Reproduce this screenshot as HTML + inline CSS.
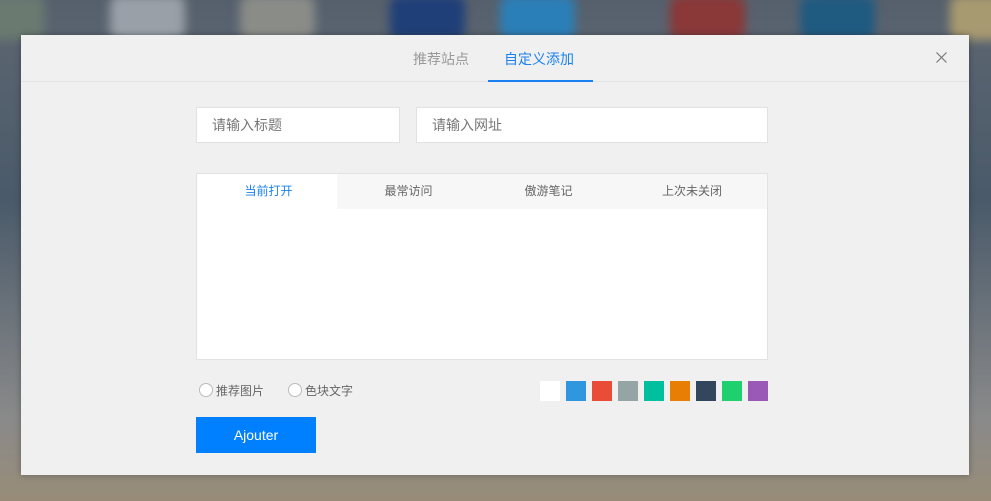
<!DOCTYPE html>
<html><head><meta charset="utf-8"><style>
*{margin:0;padding:0;box-sizing:border-box}
body{width:991px;height:501px;overflow:hidden;position:relative;font-family:"Liberation Sans","Noto Sans CJK SC",sans-serif;
background:linear-gradient(to bottom,#56606c 0,#5a6470 35px,#4a5a6a 200px,#8a8a8a 420px,#988c78 501px)}
.t{position:absolute;top:-5px;height:45px;width:75px;filter:blur(5px);border-radius:10px}
.m{position:absolute;left:21px;top:35px;width:948px;height:440px;background:#f0f0f0;box-shadow:0 0 6px rgba(0,0,0,.3)}
.hd{position:absolute;left:0;top:0;width:948px;height:47px;border-bottom:1px solid #e2e2e2}
.tab{position:absolute;top:14px;font-size:14px;color:#999}
.in{position:absolute;height:36px;background:#fff;border:1px solid #e2e2e2;font-size:14px;color:#777;padding:9px 15px;line-height:16px}
.pn{position:absolute;left:175px;top:138px;width:572px;height:187px;background:#fff;border:1px solid #e2e2e2}
.pt{position:absolute;top:0;height:35px;width:143px;background:#f7f7f7;text-align:center;line-height:35px;font-size:12px;color:#666}
.sw{position:absolute;top:346px;width:20px;height:20px}
.rd{position:absolute;top:348px;width:14px;height:14px;border:1px solid #bbb;border-radius:50%;background:#fff}
.rl{position:absolute;top:347px;font-size:12px;color:#666}
</style></head><body>
<div class="t" style="left:-30px;background:#6a7a70"></div>
<div class="t" style="left:110px;background:#9aa0a8"></div>
<div class="t" style="left:240px;background:#8a8c88"></div>
<div class="t" style="left:390px;background:#1f3f78"></div>
<div class="t" style="left:500px;background:#2b7fb8"></div>
<div class="t" style="left:670px;background:#8a3838"></div>
<div class="t" style="left:800px;background:#1f5a80"></div>
<div class="t" style="left:950px;background:#a89a70"></div>
<div class="m">
<div class="hd">
<div class="tab" style="left:392px">推荐站点</div>
<div class="tab" style="left:483px;color:#1a82f0">自定义添加</div>
<div style="position:absolute;left:467px;top:45px;width:105px;height:2px;background:#1a7ff0"></div>
<svg style="position:absolute;left:915px;top:17px" width="11" height="11" viewBox="0 0 11 11"><path d="M0.5 0.5L10.5 10.5M10.5 0.5L0.5 10.5" stroke="#777" stroke-width="1.2"/></svg>
</div>
<div class="in" style="left:175px;top:72px;width:204px">请输入标题</div>
<div class="in" style="left:395px;top:72px;width:352px">请输入网址</div>
<div class="pn">
<div class="pt" style="left:0;background:#fff;color:#1a82f0">当前打开</div>
<div class="pt" style="left:140px">最常访问</div>
<div class="pt" style="left:280px">傲游笔记</div>
<div class="pt" style="left:420px;width:150px">上次未关闭</div>
</div>
<div class="rd" style="left:178px"></div><div class="rl" style="left:195px">推荐图片</div>
<div class="rd" style="left:267px"></div><div class="rl" style="left:284px">色块文字</div>
<div class="sw" style="left:519px;background:#fff"></div>
<div class="sw" style="left:545px;background:#3097de"></div>
<div class="sw" style="left:571px;background:#e94c37"></div>
<div class="sw" style="left:597px;background:#95a5a5"></div>
<div class="sw" style="left:623px;background:#00bf9f"></div>
<div class="sw" style="left:649px;background:#e97e04"></div>
<div class="sw" style="left:675px;background:#32475e"></div>
<div class="sw" style="left:701px;background:#1fd06e"></div>
<div class="sw" style="left:727px;background:#9b59b7"></div>
<div style="position:absolute;left:175px;top:382px;width:120px;height:36px;background:#0080ff;color:#fff;font-size:14px;text-align:center;line-height:36px">Ajouter</div>
</div>
</body></html>
